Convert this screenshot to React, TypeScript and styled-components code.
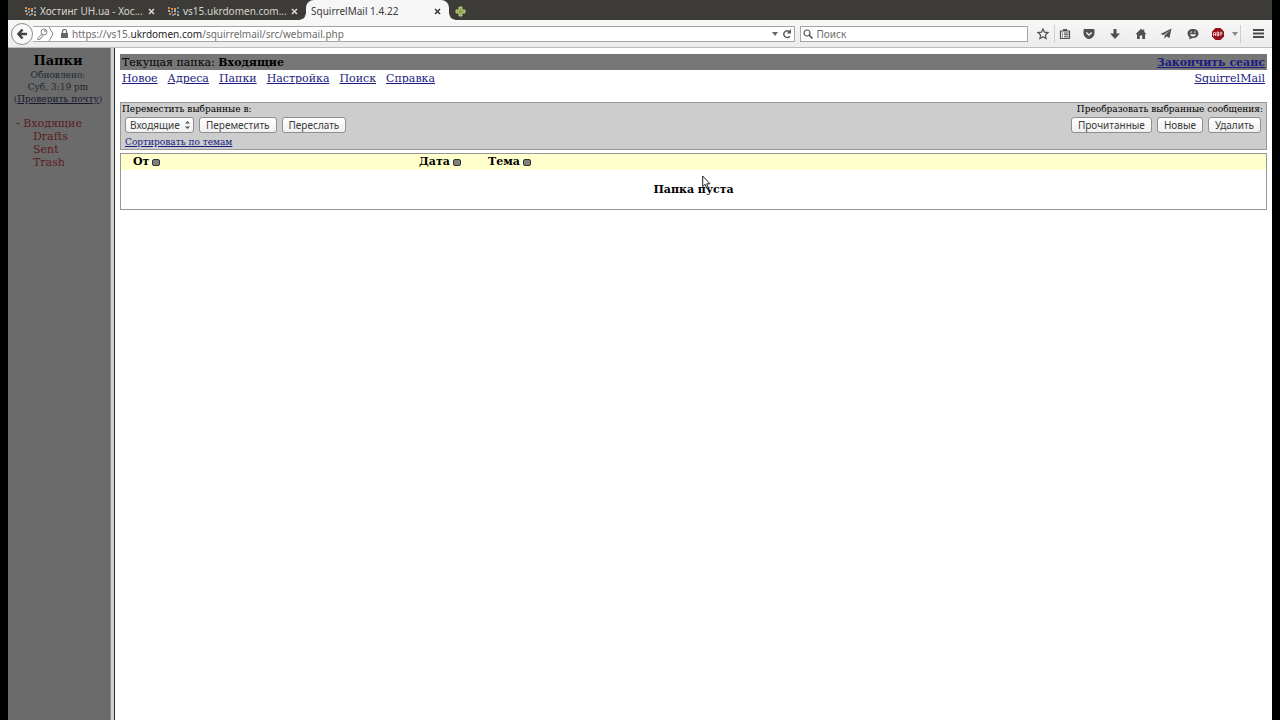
import React from "react";
import styled, { createGlobalStyle } from "styled-components";

const ui = `"Noto Sans", "Open Sans", sans-serif`;
const serif = `"DejaVu Serif", serif`;

const GlobalStyle = createGlobalStyle`
  * { box-sizing: border-box; }
  body { margin: 0; background: #000; }
`;

const Window = styled.div`
  position: relative;
  margin: 0 8px;
  min-height: 100vh;
  display: flex;
  flex-direction: column;
  background: #fff;
  font: 11px/16px ${serif};
  color: #000;
`;

const TabStrip = styled.div`
  display: flex;
  height: 20px;
  padding-left: 12px;
  background: #3c3b37;
`;

const Tab = styled.div<{ $active?: boolean }>`
  position: relative;
  display: flex;
  align-items: center;
  gap: 4px;
  width: 143px;
  height: 20px;
  padding: 2px 8px 0 5px;
  font: 10px/18px ${ui};
  color: ${(p) => (p.$active ? "#3a3a3a" : "#d8d6d0")};
  background: ${(p) => (p.$active ? "#f6f6f6" : "transparent")};
  border-radius: ${(p) => (p.$active ? "8px 8px 0 0" : "0")};
  &::before, &::after {
    content: "";
    display: ${(p) => (p.$active ? "block" : "none")};
    position: absolute;
    bottom: 0;
    width: 6px;
    height: 6px;
  }
  &::before { left: -6px; background: radial-gradient(circle at 0 0, transparent 5px, #f6f6f6 6px); }
  &::after { right: -6px; background: radial-gradient(circle at 100% 0, transparent 5px, #f6f6f6 6px); }
`;

const TabTitle = styled.span`
  flex: 1;
  white-space: nowrap;
`;

const PlainButton = styled.button`
  display: flex;
  align-items: center;
  justify-content: center;
  padding: 0;
  border: 0;
  background: none;
  color: inherit;
`;

const NewTab = styled(PlainButton)`
  width: 22px;
  padding-top: 2px;
`;

const Toolbar = styled.div`
  display: flex;
  align-items: center;
  height: 28px;
  background: linear-gradient(#f7f7f7, #ececec);
  border-bottom: 1px solid #bdbdbd;
  color: #505050;
`;

const Back = styled(PlainButton)`
  width: 22px;
  height: 22px;
  margin-left: 3px;
  border: 1px solid #8c8c8c;
  border-radius: 50%;
  background: #fafafa;
  flex: none;
`;

const Field = styled.label<{ $search?: boolean }>`
  display: flex;
  align-items: center;
  height: 16px;
  background: #fff;
  border: 1px solid #a6a6a6;
  border-left-width: ${(p) => (p.$search ? 1 : 0)}px;
  flex: ${(p) => (p.$search ? "225 1 0" : "765 1 0")};
  margin-left: ${(p) => (p.$search ? 5 : 0)}px;
  padding: 0 ${(p) => (p.$search ? 2 : 2)}px;
  gap: 4px;
  min-width: 0;
`;

const Address = styled.span`
  flex: 1;
  font: 10px/14px ${ui};
  color: #6b6b6b;
  white-space: nowrap;
  b { font-weight: 400; color: #1c1c1c; }
`;

const SearchInput = styled.input`
  flex: 1;
  min-width: 0;
  padding: 0;
  border: 0;
  outline: 0;
  background: none;
  font: 10px/14px ${ui};
  &::placeholder { color: #6e6e6e; opacity: 1; }
`;

const Tools = styled.div`
  display: flex;
  align-items: center;
  margin-left: 4px;
  flex: none;
`;

const Tool = styled(PlainButton)<{ $w: number; $line?: boolean }>`
  width: ${(p) => p.$w}px;
  height: 18px;
  border-left: ${(p) => (p.$line ? "1px solid #cfcfcf" : "0")};
`;

const MenuTool = styled(Tool)`
  padding-left: 3px;
`;

const Frames = styled.div`
  flex: 1;
  display: flex;
`;

const Sidebar = styled.nav`
  width: 107px;
  flex: none;
  padding: 5px 6px 0 0;
  background: #6b6b6b;
  border-right: 1px solid #2c2c2c;
  box-shadow: inset -3px 0 #d0d0d0, inset -4px 0 #8a8a8a;
`;

const FolderTitle = styled.h1`
  margin: 0;
  font-size: 13px;
  line-height: 16px;
  text-align: center;
`;

const Updated = styled.p`
  margin: 0;
  font-size: 9px;
  line-height: 12px;
  text-align: center;
  color: #1c2a33;
  white-space: nowrap;
  a { color: #17172e; }
`;

const FolderList = styled.ul`
  list-style: none;
  margin: 12px 0 0;
  padding: 0 0 0 8px;
  line-height: 13px;
`;

const Folder = styled.li<{ $nested?: boolean }>`
  padding-left: ${(p) => (p.$nested ? 17 : 0)}px;
  white-space: nowrap;
  color: #222;
  a { color: #5a1c22; text-decoration: none; }
`;

const Main = styled.main`
  flex: 1;
  min-width: 0;
  padding: 6px 5px 0 5px;
`;

const Bar = styled.div<{ $dark?: boolean }>`
  display: flex;
  justify-content: space-between;
  height: 16px;
  padding: 0 2px;
  line-height: 18px;
  background: ${(p) => (p.$dark ? "#777" : "transparent")};
`;

const Link = styled.a`
  color: #1a1a80;
`;

const Menu = styled.nav`
  display: flex;
  gap: 10px;
`;

const Actions = styled.form`
  display: flex;
  justify-content: space-between;
  margin-top: 16px;
  height: 48px;
  padding: 0 3px 0 1px;
  background: #cdcdcd;
  border: 1px solid #979797;
  font-size: 9px;
  line-height: 13px;
`;

const Group = styled.div<{ $right?: boolean }>`
  display: flex;
  flex-direction: column;
  align-items: ${(p) => (p.$right ? "flex-end" : "flex-start")};
`;

const Row = styled.div`
  display: flex;
  gap: 5px;
  margin: 1px 2px 3px 3px;
`;

const Button = styled.button`
  height: 16px;
  padding: 0 6px;
  border: 1px solid #8f8f8f;
  border-radius: 3px;
  background: linear-gradient(#fff, #f0f0f0);
  color: #3c3c3c;
  font: 10px/14px ${ui};
`;

const SelectBox = styled.span`
  display: inline-flex;
  align-items: center;
  height: 16px;
  width: 69px;
  padding-right: 3px;
  border: 1px solid #8f8f8f;
  border-radius: 3px;
  background: linear-gradient(#fff, #f0f0f0);
`;

const Select = styled.select`
  appearance: none;
  flex: 1;
  min-width: 0;
  height: 14px;
  padding: 0 0 0 4px;
  border: 0;
  background: none;
  color: #3c3c3c;
  font: 10px/14px ${ui};
`;

const SortLink = styled(Link)`
  margin-left: 3px;
`;

const Messages = styled.table`
  width: 100%;
  margin-top: 3px;
  border: 1px solid #979797;
  border-spacing: 0;
  font-weight: 700;
`;

const Head = styled.th<{ $w?: number }>`
  width: ${(p) => (p.$w ? p.$w + "px" : "auto")};
  height: 16px;
  padding: 0;
  background: #ffffcc;
  text-align: left;
`;

const HeadInner = styled.span`
  display: flex;
  align-items: center;
  gap: 3px;
`;

const SortBox = styled.button`
  width: 8px;
  height: 7px;
  padding: 0;
  border: 1px solid #333;
  border-radius: 2px;
  background: #808080;
`;

const Empty = styled.td`
  height: 39px;
  padding: 0;
  text-align: center;
`;

const Pointer = styled.svg`
  position: absolute;
  left: 694px;
  top: 175px;
`;

const Favicon = () => (
  <svg width="11" height="9" viewBox="0 0 11 9" aria-hidden="true">
    <path fill="#d98b4a" d="M0 0h2v2H0zM3 1h2v2H3zM6 1h2v2H6zM1 6h2v2H1zM6 6h2v2H6z" />
    <path fill="#5f93c8" d="M9 0h2v2H9zM3 4h2v2H3zM9 4h2v2H9zM4 7h2v2H4z" />
    <path fill="#b9b2a6" d="M0 3h2v2H0zM6 3h2v2H6zM9 7h2v2H9z" />
  </svg>
);

const Close = () => (
  <svg width="7" height="7" viewBox="0 0 7 7" stroke="currentColor" strokeWidth="1.6" aria-hidden="true">
    <path d="M1 1l5 5M6 1L1 6" />
  </svg>
);

const PageTab = ({ title, active }: { title: string; active?: boolean }) => (
  <Tab $active={active}>
    {!active && <Favicon />}
    <TabTitle>{title}</TabTitle>
    <PlainButton aria-label="Закрыть вкладку"><Close /></PlainButton>
  </Tab>
);

const SortHead = ({ label, w }: { label: string; w?: number }) => (
  <Head $w={w}>
    <HeadInner>{label}<SortBox type="button" aria-label={`Сортировать: ${label}`} /></HeadInner>
  </Head>
);

const tools = [
  { label: "Закладка", w: 22, icon: <path d="M6 1l1.500 3.200 3.500.4-2.600 2.400.7 3.500L6 8.700l-3.100 1.800.7-3.500L1 4.600l3.500-.4z" fill="none" stroke="currentColor" strokeWidth="1.200" /> },
  { label: "Список закладок", w: 21, line: true, icon: <><path d="M1.500 3h9v7.500h-9z" fill="none" stroke="currentColor" strokeWidth="1.200" /><path d="M4 1h4v2H4zM3 4.500h1v1H3zM5 4.500h4.500v1H5zM3 6.300h1v1H3zM5 6.300h4.500v1H5zM3 8.200h1v1H3zM5 8.200h4.500v1H5z" fill="currentColor" /></> },
  { label: "Pocket", w: 28, icon: <><path d="M1.500 1h9q1 0 1 1v3.500q0 3-3 4.800Q6 11.700 3.500 10.300.500 8.500.500 5.500V2q0-1 1-1z" fill="currentColor" /><path d="M3.300 4.500L6 7l2.700-2.500" fill="none" stroke="#f3f3f3" strokeWidth="1.400" /></> },
  { label: "Загрузки", w: 24, icon: <path d="M4.500 1h3v4.500H11L6 11 1 5.500h3.500z" fill="currentColor" /> },
  { label: "Домой", w: 27, icon: <path d="M6 .8l1.700 1.700V1.500h1.600v2.600l2.200 2.200H10V11H7.200V7.500H4.800V11H2V6.300H.500z" fill="currentColor" /> },
  { label: "Поделиться", w: 24, icon: <path d="M11.500.500L9.500 10 6.300 8.300 4.500 11V7.500L10 2.500 3.500 7 .500 6z" fill="currentColor" /> },
  { label: "Чат", w: 29, icon: <><path d="M6 1c3.500 0 5.500 2 5.500 4.500S9.500 10 6 10L2 11.300l.5-2.200Q.500 7.800.500 5.500C.500 3 2.500 1 6 1z" fill="currentColor" /><path d="M3.500 3.500h1.300v1.300H3.500zM7.200 3.500h1.300v1.300H7.200zM3 6.200h6Q8.500 8.500 6 8.500T3 6.200z" fill="#f1f1f1" /></> },
];

export default function App() {
  return (
    <>
      <GlobalStyle />
      <Window>
        <TabStrip>
          <PageTab title="Хостинг UH.ua - Хос..." />
          <PageTab title="vs15.ukrdomen.com..." />
          <PageTab title="SquirrelMail 1.4.22" active />
          <NewTab aria-label="Новая вкладка">
            <svg width="11" height="11" viewBox="0 0 11 11" aria-hidden="true">
              <path d="M4 1h3v3h3v3H7v3H4V7H1V4h3z" fill="#8fa845" stroke="#d3dca6" strokeWidth=".8" />
            </svg>
          </NewTab>
        </TabStrip>
        <Toolbar>
          <Back aria-label="Назад">
            <svg width="12" height="12" viewBox="0 0 12 12" fill="none" stroke="#444" strokeWidth="2.600" aria-hidden="true">
              <path d="M6.500 1.500L2.500 6l4 4.500M3 6h8" />
            </svg>
          </Back>
          <Field as="div">
            <svg width="22" height="14" viewBox="0 0 22 14" fill="none" stroke="#8a8a8a" aria-hidden="true">
              <circle cx="9" cy="5" r="3" />
              <circle cx="10" cy="4" r=".6" />
              <path d="M6.800 7L2.500 11.500v1H5v-1.500h1.500L8 8M14 0l4 7-4 7" />
            </svg>
            <svg width="7" height="9" viewBox="0 0 7 9" aria-hidden="true">
              <path d="M1.500 4V2.500a2 2 0 014 0V4" fill="none" stroke="#666" strokeWidth="1.200" />
              <path d="M0 4h7v5H0z" fill="#666" />
            </svg>
            <Address>https://vs15.<b>ukrdomen.com</b>/squirrelmail/src/webmail.php</Address>
            <svg width="6" height="4" viewBox="0 0 6 4" aria-hidden="true"><path d="M0 0h6L3 4z" fill="#666" /></svg>
            <PlainButton aria-label="Обновить">
              <svg width="10" height="10" viewBox="0 0 10 10" aria-hidden="true">
                <path d="M7.800 7.200A3.300 3.300 0 117.200 2.500" fill="none" stroke="#555" strokeWidth="1.400" />
                <path d="M9 0v4.500H4.800z" fill="#555" />
              </svg>
            </PlainButton>
          </Field>
          <Field $search>
            <svg width="10" height="10" viewBox="0 0 10 10" fill="none" stroke="#555" aria-hidden="true">
              <circle cx="4" cy="4" r="3" strokeWidth="1.200" />
              <path d="M6 6L9.500 9.500" strokeWidth="1.600" />
            </svg>
            <SearchInput placeholder="Поиск" aria-label="Поиск" />
          </Field>
          <Tools>
            {tools.map((t) => (
              <Tool key={t.label} $w={t.w} $line={t.line} aria-label={t.label}>
                <svg width="12" height="12" viewBox="0 0 12 12" aria-hidden="true">{t.icon}</svg>
              </Tool>
            ))}
            <Tool $w={22} aria-label="Adblock Plus">
              <svg width="12" height="12" viewBox="0 0 12 12" aria-hidden="true">
                <path d="M3.500 0h5L12 3.500v5L8.500 12h-5L0 8.500v-5z" fill="#96101c" />
                <path d="M1.500 8V5l1-1 1 1v3M1.500 6.500h2M5 4v3.800h1.500V4H5M5 6h1.500M8.200 8V4.200h1.600v2H8.200" fill="none" stroke="#f6dede" strokeWidth=".8" />
              </svg>
            </Tool>
            <Tool $w={11} aria-label="Меню Adblock">
              <svg width="6" height="4" viewBox="0 0 6 4" aria-hidden="true"><path d="M0 0h6L3 4z" fill="#888" /></svg>
            </Tool>
            <MenuTool $w={32} $line aria-label="Меню">
              <svg width="11" height="9" viewBox="0 0 11 9" aria-hidden="true"><path d="M0 0h11v2H0zM0 3.500h11v2H0zM0 7h11v2H0z" fill="#4a4a4a" /></svg>
            </MenuTool>
          </Tools>
        </Toolbar>
        <Frames>
          <Sidebar>
            <FolderTitle>Папки</FolderTitle>
            <Updated>Обновлено:<br />Суб, 3:19 pm<br />(<a href="#check">Проверить почту</a>)</Updated>
            <FolderList>
              <Folder>- <a href="#inbox">Входящие</a></Folder>
              <Folder $nested><a href="#drafts">Drafts</a></Folder>
              <Folder $nested><a href="#sent">Sent</a></Folder>
              <Folder $nested><a href="#trash">Trash</a></Folder>
            </FolderList>
          </Sidebar>
          <Main>
            <Bar $dark>
              <span>Текущая папка: <b>Входящие</b></span>
              <b><Link href="#logout">Закончить сеанс</Link></b>
            </Bar>
            <Bar>
              <Menu>
                {["Новое", "Адреса", "Папки", "Настройка", "Поиск", "Справка"].map((m) => (
                  <Link key={m} href="#menu">{m}</Link>
                ))}
              </Menu>
              <Link href="#about">SquirrelMail</Link>
            </Bar>
            <Actions onSubmit={(e) => e.preventDefault()}>
              <Group>
                <label htmlFor="target">Переместить выбранные в:</label>
                <Row>
                  <SelectBox>
                    <Select id="target"><option>Входящие</option></Select>
                    <svg width="5" height="8" viewBox="0 0 5 8" aria-hidden="true"><path d="M0 2.500L2.500 0 5 2.500zM0 5.500h5L2.500 8z" fill="#555" /></svg>
                  </SelectBox>
                  <Button>Переместить</Button>
                  <Button>Переслать</Button>
                </Row>
                <SortLink href="#threads">Сортировать по темам</SortLink>
              </Group>
              <Group $right>
                <span>Преобразовать выбранные сообщения:</span>
                <Row>
                  <Button>Прочитанные</Button>
                  <Button>Новые</Button>
                  <Button>Удалить</Button>
                </Row>
              </Group>
            </Actions>
            <Messages>
              <thead>
                <tr>
                  <Head $w={12} />
                  <SortHead label="От" w={286} />
                  <SortHead label="Дата" w={69} />
                  <SortHead label="Тема" />
                </tr>
              </thead>
              <tbody>
                <tr><Empty colSpan={4}>Папка пуста</Empty></tr>
              </tbody>
            </Messages>
          </Main>
        </Frames>
        <Pointer width="9" height="15" viewBox="0 0 9 15" aria-hidden="true">
          <path d="M.7 1v10.500l2.400-2.200 1.700 4 1.600-.7-1.700-3.800H8z" fill="#fff" stroke="#222" />
        </Pointer>
      </Window>
    </>
  );
}
